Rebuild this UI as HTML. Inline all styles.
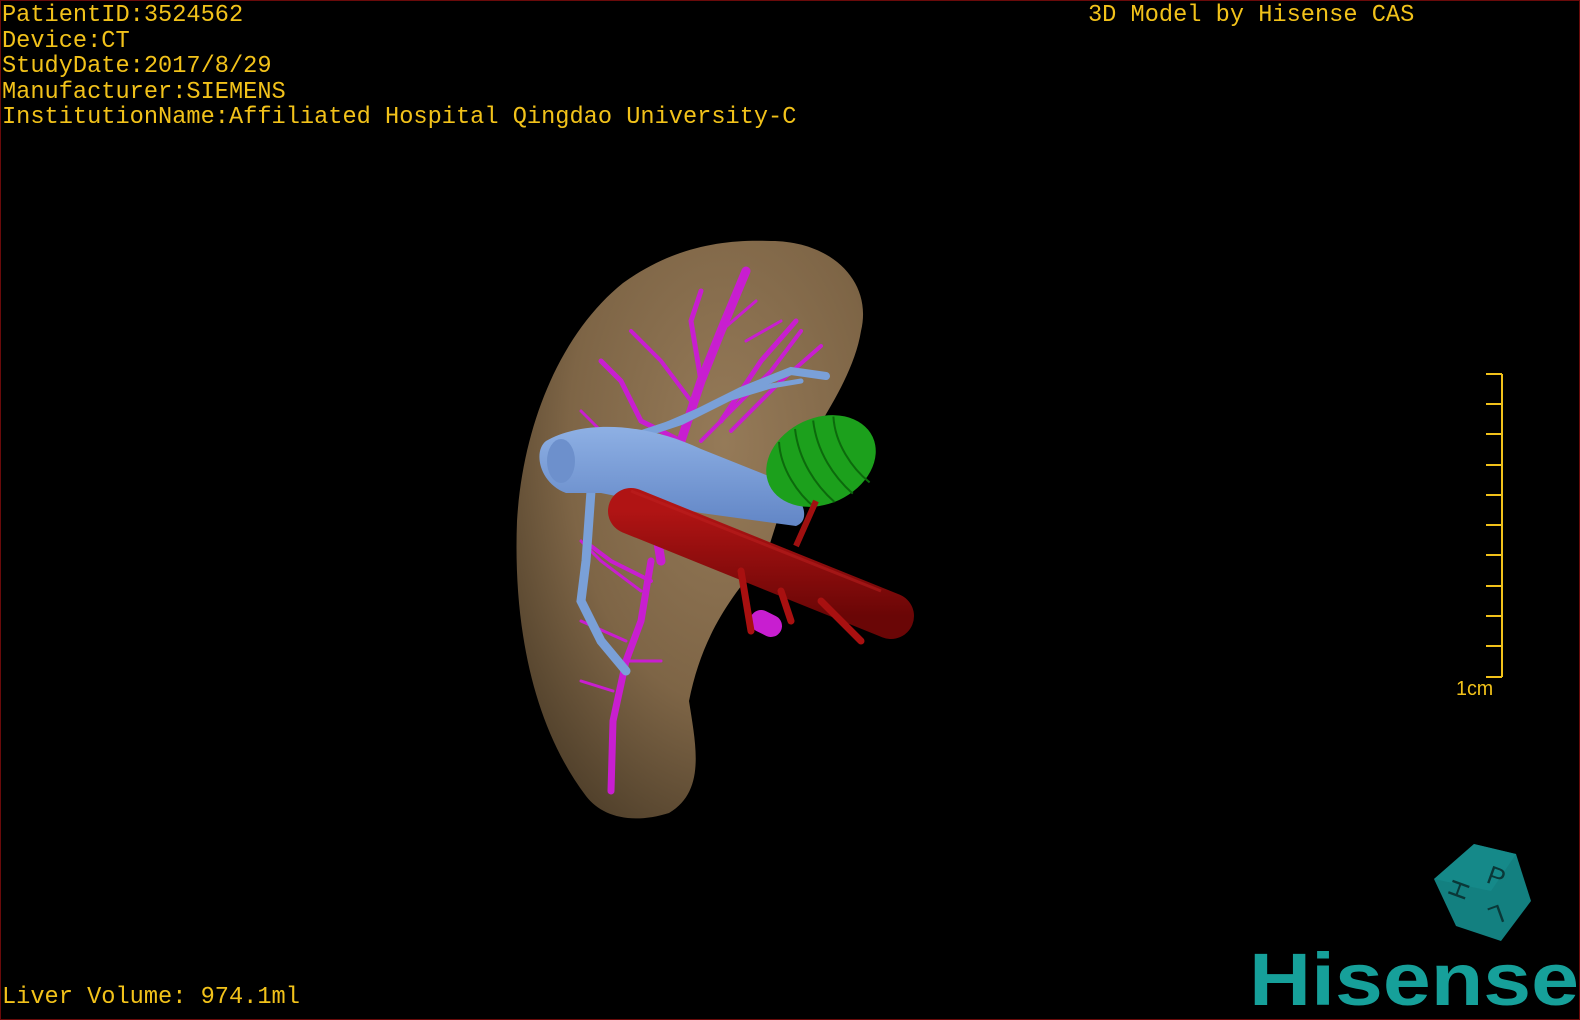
<!DOCTYPE html>
<html><head><meta charset="utf-8"><style>
html,body{margin:0;padding:0;background:#000;}
#wrap{position:relative;width:1580px;height:1020px;background:#000;box-sizing:border-box;border:1px solid #6a0a0a;overflow:hidden;}
.t{position:absolute;color:#f2c21a;font-family:"Liberation Mono",monospace;font-size:24px;line-height:25.5px;white-space:pre;transform:scaleX(0.985);transform-origin:0 0;}
</style></head><body><div id="wrap">
<div class="t" style="left:1px;top:2px;">PatientID:3524562
Device:CT
StudyDate:2017/8/29
Manufacturer:SIEMENS
InstitutionName:Affiliated Hospital Qingdao University-C</div>
<div class="t" style="left:1087px;top:2px;">3D Model by Hisense CAS</div>
<div class="t" style="left:1px;top:984px;">Liver Volume: 974.1ml</div>
<div class="t" style="left:1455px;top:676px;font-family:'Liberation Sans',sans-serif;font-size:20px;">1cm</div>
<svg width="1580" height="1020" style="position:absolute;left:0;top:0">
<defs>
<radialGradient id="lg" cx="0.6" cy="0.35" r="0.75"><stop offset="0" stop-color="#957a58"/><stop offset="0.6" stop-color="#7e6546"/><stop offset="1" stop-color="#4f3f2a"/></radialGradient>
<linearGradient id="bg" x1="0" y1="0" x2="0" y2="1"><stop offset="0" stop-color="#8eb0e4"/><stop offset="1" stop-color="#6286c6"/></linearGradient>
<linearGradient id="rg" x1="0" y1="0" x2="0" y2="1"><stop offset="0" stop-color="#b01414"/><stop offset="1" stop-color="#6a0606"/></linearGradient>
</defs>
<path d="M770,240 C830,240 872,280 860,330 C852,380 812,430 792,470 L765,555 C725,600 700,640 688,700 C695,745 705,790 668,812 C630,824 600,815 585,795 C532,725 512,625 516,520 C522,420 562,330 622,282 C672,246 722,238 770,240 Z" fill="url(#lg)"/>
<g stroke="#c81ed0" stroke-linecap="round" fill="none">
<path d="M660,560 L650,500 L680,440 L700,380 L720,330 L745,270" stroke-width="9"/>
<path d="M700,380 L690,320 L700,290" stroke-width="5"/>
<path d="M690,400 L660,360 L630,330" stroke-width="4"/>
<path d="M680,440 L640,420 L620,380 L600,360" stroke-width="5"/>
<path d="M720,420 L760,360 L795,320" stroke-width="5"/>
<path d="M730,430 L780,380 L820,345" stroke-width="4"/>
<path d="M700,440 L740,400 L770,370 L800,330" stroke-width="4"/>
<path d="M720,330 L755,300 M745,340 L780,320" stroke-width="3"/>
<path d="M650,560 L640,620 L625,660 L612,720 L610,790" stroke-width="7"/>
<path d="M640,590 L600,560 L580,540" stroke-width="3"/>
<path d="M625,640 L580,620" stroke-width="3"/>
<path d="M620,660 L660,660" stroke-width="3"/>
<path d="M612,690 L580,680" stroke-width="3"/>
<path d="M640,500 L600,430 L580,410" stroke-width="3"/>
<path d="M650,580 L610,560 L590,545" stroke-width="4"/>
<path d="M760,620 L770,625" stroke-width="22"/>
</g>
<g stroke="#7aa0d8" stroke-linecap="round" fill="none">
<path d="M620,440 L680,420 L740,390 L790,370 L825,375" stroke-width="8"/>
<path d="M650,430 L720,400 L770,385 L800,380" stroke-width="5"/>
<path d="M590,490 L585,560 L580,600 L600,640 L625,670" stroke-width="9"/>
</g>
<path d="M545,440 C580,420 640,420 700,448 L775,478 C805,495 810,520 795,525 L700,512 L600,492 L565,492 C538,482 532,450 545,440 Z" fill="url(#bg)"/>
<ellipse cx="560" cy="460" rx="14" ry="22" fill="#6d90cc"/>
<g transform="rotate(-25 820 460)"><ellipse cx="820" cy="460" rx="57" ry="43" fill="#1ca01c"/>
<g stroke="#0c6a0c" stroke-width="2" fill="none"><path d="M790,425 C780,450 785,480 795,500"/><path d="M810,420 C800,450 805,480 815,503"/><path d="M830,420 C820,450 825,480 835,503"/><path d="M850,425 C840,450 845,480 855,500"/></g></g>
<path d="M815,500 L795,545" stroke="#a01010" stroke-width="6"/>
<path d="M630,510 L890,615" stroke="url(#rg)" stroke-width="46" stroke-linecap="round"/>
<path d="M630,490 L880,590" stroke="#c02020" stroke-width="3" opacity="0.5"/>
<path d="M740,570 L750,630 M780,590 L790,620 M820,600 L860,640" stroke="#a81010" stroke-width="7" stroke-linecap="round"/>
<g stroke="#f2c21a" stroke-width="2">
<line x1="1501" y1="373" x2="1501" y2="676"/>
<line x1="1485" y1="373" x2="1501" y2="373"/><line x1="1485" y1="403" x2="1501" y2="403"/><line x1="1485" y1="433" x2="1501" y2="433"/><line x1="1485" y1="464" x2="1501" y2="464"/><line x1="1485" y1="494" x2="1501" y2="494"/><line x1="1485" y1="524" x2="1501" y2="524"/><line x1="1485" y1="554" x2="1501" y2="554"/><line x1="1485" y1="585" x2="1501" y2="585"/><line x1="1485" y1="615" x2="1501" y2="615"/><line x1="1485" y1="645" x2="1501" y2="645"/><line x1="1485" y1="676" x2="1501" y2="676"/>
</g>
<polygon points="1473,843 1515,853 1530,900 1500,940 1455,925 1433,878" fill="#138080"/>
<polygon points="1473,843 1515,853 1490,890 1433,878" fill="#179090" opacity="0.6"/>
<g font-family="Liberation Sans,sans-serif" font-size="26" fill="#0a3838">
<text x="1487" y="885" transform="rotate(20 1497 875)">P</text>
<text x="1448" y="897" transform="rotate(-70 1458 888)">H</text>
<text x="1487" y="925" transform="rotate(160 1495 915)">L</text>
</g>
<text x="1248" y="1004" font-family="Liberation Sans,sans-serif" font-weight="bold" font-size="74" fill="#16a09a" textLength="330" lengthAdjust="spacingAndGlyphs">Hisense</text>
</svg>
</div></body></html>
